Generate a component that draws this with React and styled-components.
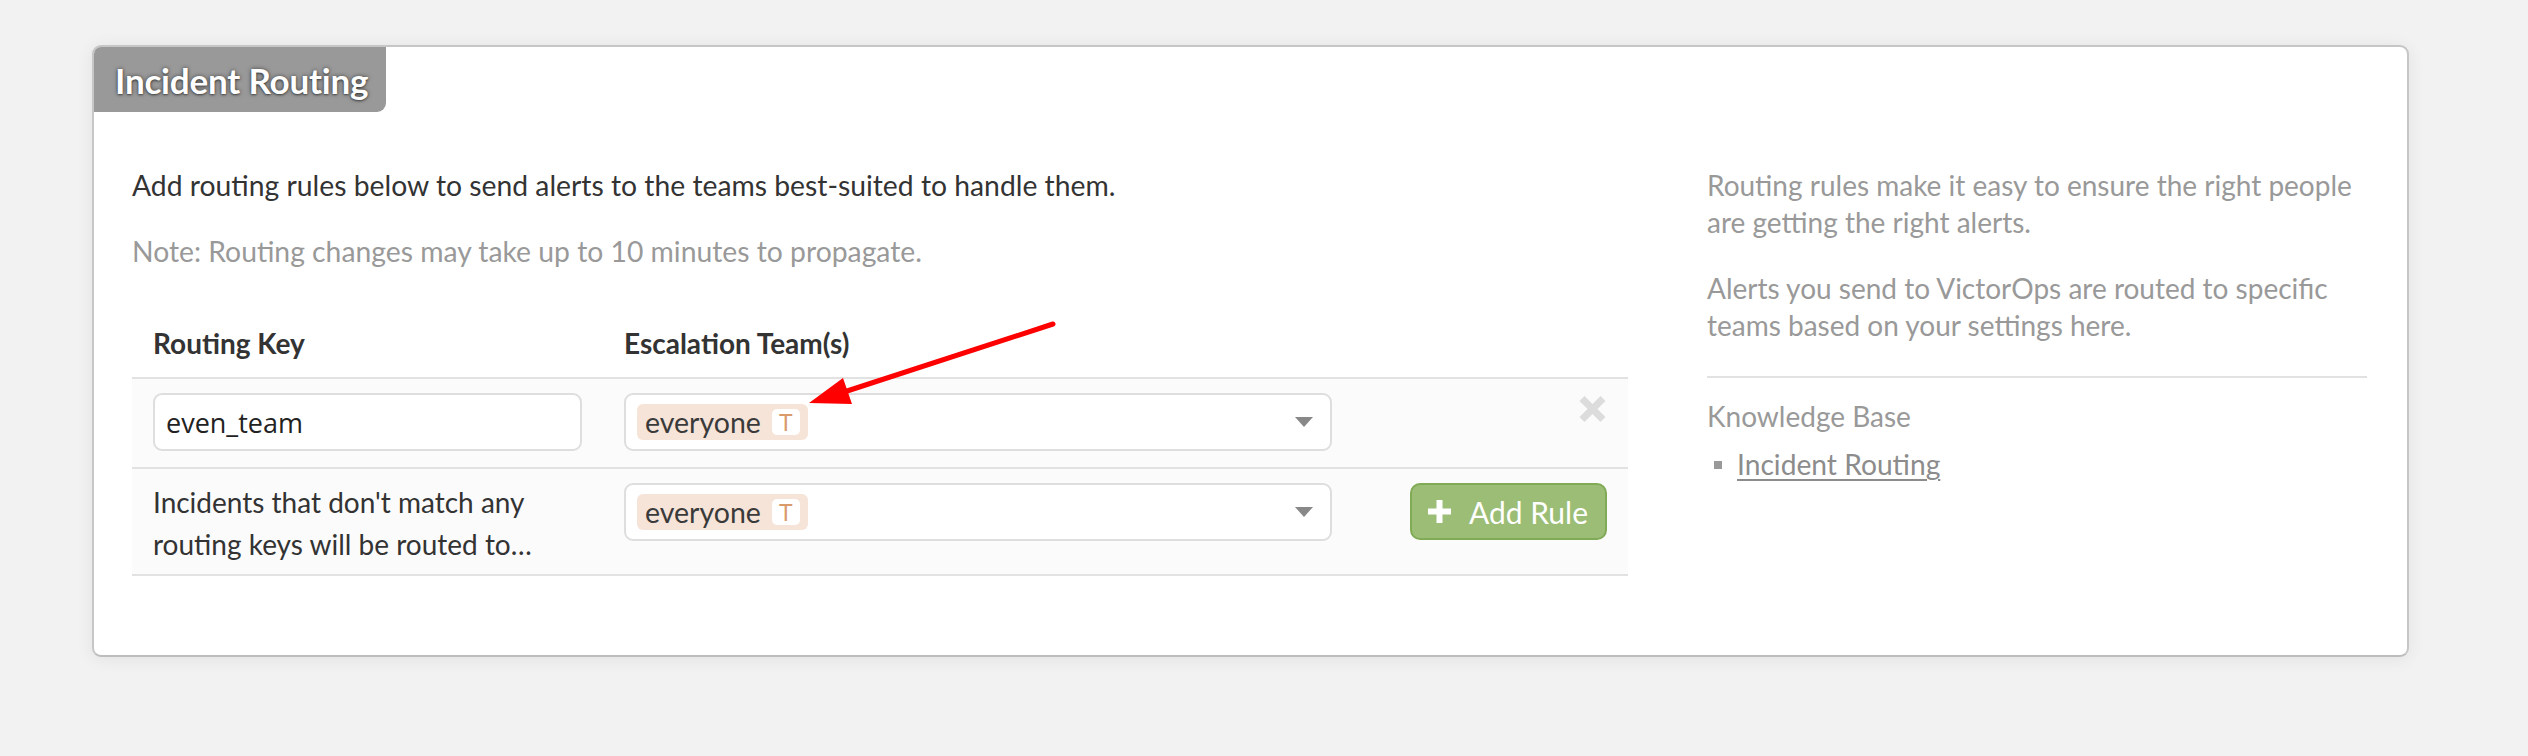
import React from "react";
import styled, { createGlobalStyle } from "styled-components";

const Global = createGlobalStyle`
  html, body { margin: 0; padding: 0; background: #f2f2f2; }
  body { font-family: Lato, "Open Sans", sans-serif; color: #333; }
  * { box-sizing: border-box; }
`;

const Page = styled.div`
  padding: 45px 0 0 92px;
  min-height: 756px;
`;

const Card = styled.section`
  position: relative;
  width: 2317px;
  background: #fff;
  border: 2px solid #c6c6c6;
  border-bottom-color: #bdbdbd;
  border-radius: 9px;
  box-shadow: 0 2px 18px rgba(0, 0, 0, 0.07);
  overflow: hidden;
`;

const Tab = styled.h2`
  display: inline-flex;
  align-items: center;
  height: 65px;
  margin: 0;
  padding: 0 18px 0 21px;
  background: #999;
  border-bottom-right-radius: 9px;
  color: #fff;
  font-family: Lato, sans-serif;
  font-weight: 700;
  font-size: 35px;
  letter-spacing: -0.2px;
  text-shadow: 0 0 4px rgba(0, 0, 0, 0.55), 0 1px 2px rgba(0, 0, 0, 0.4);
`;

const Body = styled.div`
  display: flex;
  justify-content: space-between;
  padding: 55px 40px 79px 38px;
`;

const Main = styled.div`
  width: 1496px;
`;

const Aside = styled.aside`
  width: 660px;
  color: #999;
  font-size: 28px;
  line-height: 37px;
`;

const Text = styled.p`
  margin: ${(p) => p.$mt || 0}px 0 0;
  font-size: ${(p) => p.$size || 28}px;
  line-height: 37px;
  color: ${(p) => p.$color || "#333"};
`;

const Table = styled.div`
  margin-top: 34px;
`;

const Row = styled.div`
  display: grid;
  grid-template-columns: 471px 750px 275px;
  align-items: start;
  padding: ${(p) => p.$pad};
  background: ${(p) => p.$bg || "#fbfbfb"};
  border-bottom: 2px solid #e2e2e2;
`;

const Cell = styled.div`
  display: flex;
  justify-content: ${(p) => (p.$end ? "flex-end" : "flex-start")};
  padding: 0 21px;
`;

const HeadCell = styled(Cell)`
  font-weight: 700;
  font-size: 28px;
  line-height: 37px;
  color: #333;
`;

const KeyInput = styled.input`
  width: 431px;
  height: 58px;
  padding: 0 11px;
  border: 2px solid #dedede;
  border-radius: 9px;
  background: #fff;
  font-family: "Open Sans", Lato, sans-serif;
  font-size: 27px;
  color: #222;
  outline: none;
`;

const Fallback = styled.div`
  margin-top: -2px;
  font-size: 28px;
  line-height: 42px;
  color: #333;
`;

const Select = styled.div`
  display: flex;
  align-items: center;
  justify-content: space-between;
  width: 708px;
  height: 58px;
  padding: 0 17px 0 11px;
  border: 2px solid #dedede;
  border-radius: 9px;
  background: #fff;
`;

const Tag = styled.span`
  display: inline-flex;
  align-items: center;
  gap: 11px;
  height: 36px;
  padding: 0 8px;
  border-radius: 6px;
  background: #f6e4d8;
  color: #3a3a3a;
  font-size: 28.5px;
`;

const Badge = styled.span`
  display: inline-flex;
  align-items: center;
  justify-content: center;
  width: 28px;
  height: 26px;
  border-radius: 5px;
  background: #fff;
  color: #d99b6c;
  font-size: 23px;
`;

const Caret = styled.span`
  width: 0;
  height: 0;
  border-left: 9px solid transparent;
  border-right: 9px solid transparent;
  border-top: 10px solid #888;
`;

const Remove = styled.button`
  margin-top: 2px;
  padding: 0;
  border: 0;
  background: none;
  line-height: 0;
  cursor: pointer;
`;

const AddButton = styled.button`
  display: inline-flex;
  align-items: center;
  gap: 18px;
  height: 57px;
  padding: 0 17px 0 16px;
  border: 2px solid #80aa55;
  border-radius: 10px;
  background: #9bbd75;
  color: #fff;
  font-family: Lato, sans-serif;
  font-size: 30px;
  cursor: pointer;
`;

const Rule = styled.hr`
  margin: 32px 0 0;
  border: 0;
  border-top: 2px solid #e2e2e2;
`;

const LinkItem = styled.div`
  display: flex;
  align-items: center;
  gap: 15px;
  margin-top: 11px;
  padding-left: 7px;
`;

const Bullet = styled.span`
  width: 8px;
  height: 8px;
  background: #999;
`;

const Link = styled.a`
  color: #8c8c8c;
  font-size: 28.2px;
  text-decoration: underline;
  text-underline-offset: 4px;
  text-decoration-thickness: 2px;
`;

const Arrow = styled.svg`
  position: absolute;
  left: 700px;
  top: 270px;
  pointer-events: none;
`;

const Tags = () => (
  <Select>
    <Tag>
      everyone<Badge>T</Badge>
    </Tag>
    <Caret />
  </Select>
);

export default function App() {
  return (
    <Page>
      <Global />
      <Card>
        <Tab>Incident Routing</Tab>
        <Body>
          <Main>
            <Text $size={28.3}>Add routing rules below to send alerts to the teams best-suited to handle them.</Text>
            <Text $mt={29} $size={28.3} $color="#999">
              Note: Routing changes may take up to 10 minutes to propagate.
            </Text>
            <Table>
              <Row $bg="#fff" $pad="21px 0 15px">
                <HeadCell>Routing Key</HeadCell>
                <HeadCell>Escalation Team(s)</HeadCell>
                <HeadCell />
              </Row>
              <Row $pad="14px 0 16px">
                <Cell>
                  <KeyInput defaultValue="even_team" />
                </Cell>
                <Cell>
                  <Tags />
                </Cell>
                <Cell $end>
                  <Remove aria-label="Remove rule">
                    <svg width="29" height="28" viewBox="0 0 29 28">
                      <path d="M4 3.5 L25 24.5 M25 3.5 L4 24.5" stroke="#dcdcdc" strokeWidth="7" />
                    </svg>
                  </Remove>
                </Cell>
              </Row>
              <Row $pad="14px 0 9px">
                <Cell>
                  <Fallback>Incidents that don't match any routing keys will be routed to…</Fallback>
                </Cell>
                <Cell>
                  <Tags />
                </Cell>
                <Cell $end>
                  <AddButton>
                    <svg width="23" height="23" viewBox="0 0 23 23">
                      <path d="M11.5 0 V23 M0 11.5 H23" stroke="#fff" strokeWidth="6" />
                    </svg>
                    Add Rule
                  </AddButton>
                </Cell>
              </Row>
            </Table>
          </Main>
          <Aside>
            <Text $color="#999">Routing rules make it easy to ensure the right people are getting the right alerts.</Text>
            <Text $mt={29} $color="#999">
              Alerts you send to VictorOps are routed to specific teams based on your settings here.
            </Text>
            <Rule />
            <Text $mt={20} $color="#999">Knowledge Base</Text>
            <LinkItem>
              <Bullet />
              <Link href="#">Incident Routing</Link>
            </LinkItem>
          </Aside>
        </Body>
        <Arrow width="270" height="100" viewBox="0 0 270 100">
          <line x1="259" y1="7" x2="50" y2="75" stroke="#ff0000" strokeWidth="5" strokeLinecap="round" />
          <polygon points="15,86 58,87 49,61" fill="#ff0000" />
        </Arrow>
      </Card>
    </Page>
  );
}
